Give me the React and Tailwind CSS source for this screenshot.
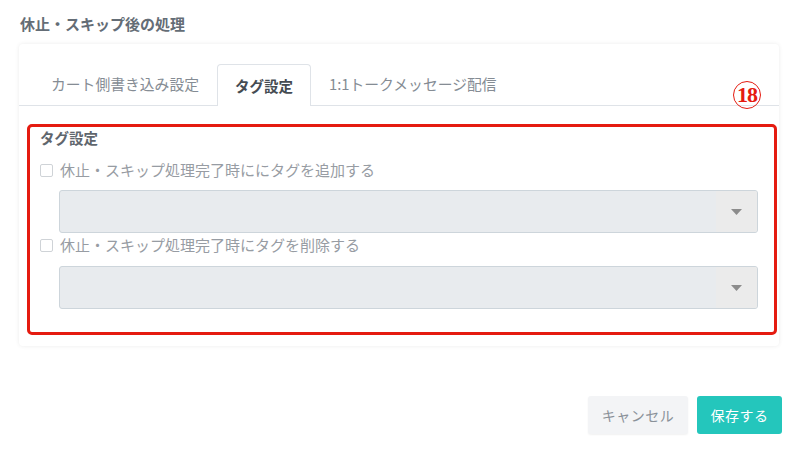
const FONT = { fontFamily: '"Noto Sans CJK JP", "Noto Sans", sans-serif' };

function Caret() {
  return (
    <svg width="11" height="6" viewBox="0 0 11 6">
      <path d="M0 0h11L5.5 6z" fill="#8c8c8c" />
    </svg>
  );
}

function DisabledSelect() {
  return (
    <div className="ml-[19px] flex h-[43px] overflow-hidden rounded-[3px] border border-[#cdd5db] bg-[#e8ebee]">
      <div className="flex-1" />
      <div className="flex w-[41px] items-center justify-center bg-[#ebebeb]">
        <Caret />
      </div>
    </div>
  );
}

function CheckRow({ label }) {
  return (
    <label className="flex h-[20px] items-center gap-[7px]">
      <span className="h-[13px] w-[13px] rounded-[2px] border border-[#cfd3d7] bg-white" />
      <span className="text-[15px] leading-[20px] text-[#979ca3]">{label}</span>
    </label>
  );
}

export default function App() {
  return (
    <div className="relative h-[449px] w-[791px] overflow-hidden bg-white" style={FONT}>
      <div className="pl-[20px] pt-[14px] text-[15px] font-bold leading-[20px] text-[#646d76]">
        休止・スキップ後の処理
      </div>

      <div className="ml-[19px] mr-[12px] mt-[10px] h-[302px] rounded-[4px] bg-white shadow-[0_0_4px_rgba(0,0,0,0.08)]">
        <div className="flex border-b border-[#dfe3e8] pl-[14px] pt-[20px]">
          <div className="flex h-[41px] items-center px-[18px] text-[14.8px] text-[#858c94]">
            カート側書き込み設定
          </div>
          <div className="-mb-px flex h-[42px] items-center rounded-t-[4px] border border-b-0 border-[#dfe3e8] bg-white px-[17px] text-[14.5px] font-bold text-[#454b52]">
            タグ設定
          </div>
          <div className="flex h-[41px] items-center px-[18px] text-[14.8px] text-[#858c94]">
            1:1トークメッセージ配信
          </div>
        </div>

        <div className="pl-[21px] pr-[21px] pt-[22px]">
          <div className="text-[14.5px] font-bold leading-[20px] text-[#5f666d]">タグ設定</div>
          <div className="mt-[12px]">
            <CheckRow label="休止・スキップ処理完了時ににタグを追加する" />
          </div>
          <div className="mt-[10px]">
            <DisabledSelect />
          </div>
          <div className="mt-[2px]">
            <CheckRow label="休止・スキップ処理完了時にタグを削除する" />
          </div>
          <div className="mt-[11px]">
            <DisabledSelect />
          </div>
        </div>
      </div>

      <div className="mr-[9px] mt-[50px] flex justify-end gap-[9px]">
        <button className="h-[38px] w-[100px] rounded-[3px] bg-[#f3f4f6] text-[14px] tracking-[0.5px] text-[#8a9199] shadow-[0_1px_2px_rgba(0,0,0,0.06)]">
          キャンセル
        </button>
        <button className="h-[38px] w-[85px] rounded-[3px] bg-[#24c6bc] text-[14px] tracking-[0.5px] text-white">
          保存する
        </button>
      </div>

      {/* annotation overlay */}
      <div className="pointer-events-none absolute left-[27px] top-[124px] h-[211px] w-[750px] rounded-[5px] border-[3px] border-[#e51b10]" />
      <div className="absolute left-[733px] top-[81px] flex h-[28px] w-[28px] items-center justify-center rounded-full border-[1.5px] border-[#e51b10] text-[#e51b10]">
        <span className="text-[22px] font-bold leading-none tracking-[-1px]" style={{ fontFamily: '"Liberation Serif", serif' }}>18</span>
      </div>
    </div>
  );
}
